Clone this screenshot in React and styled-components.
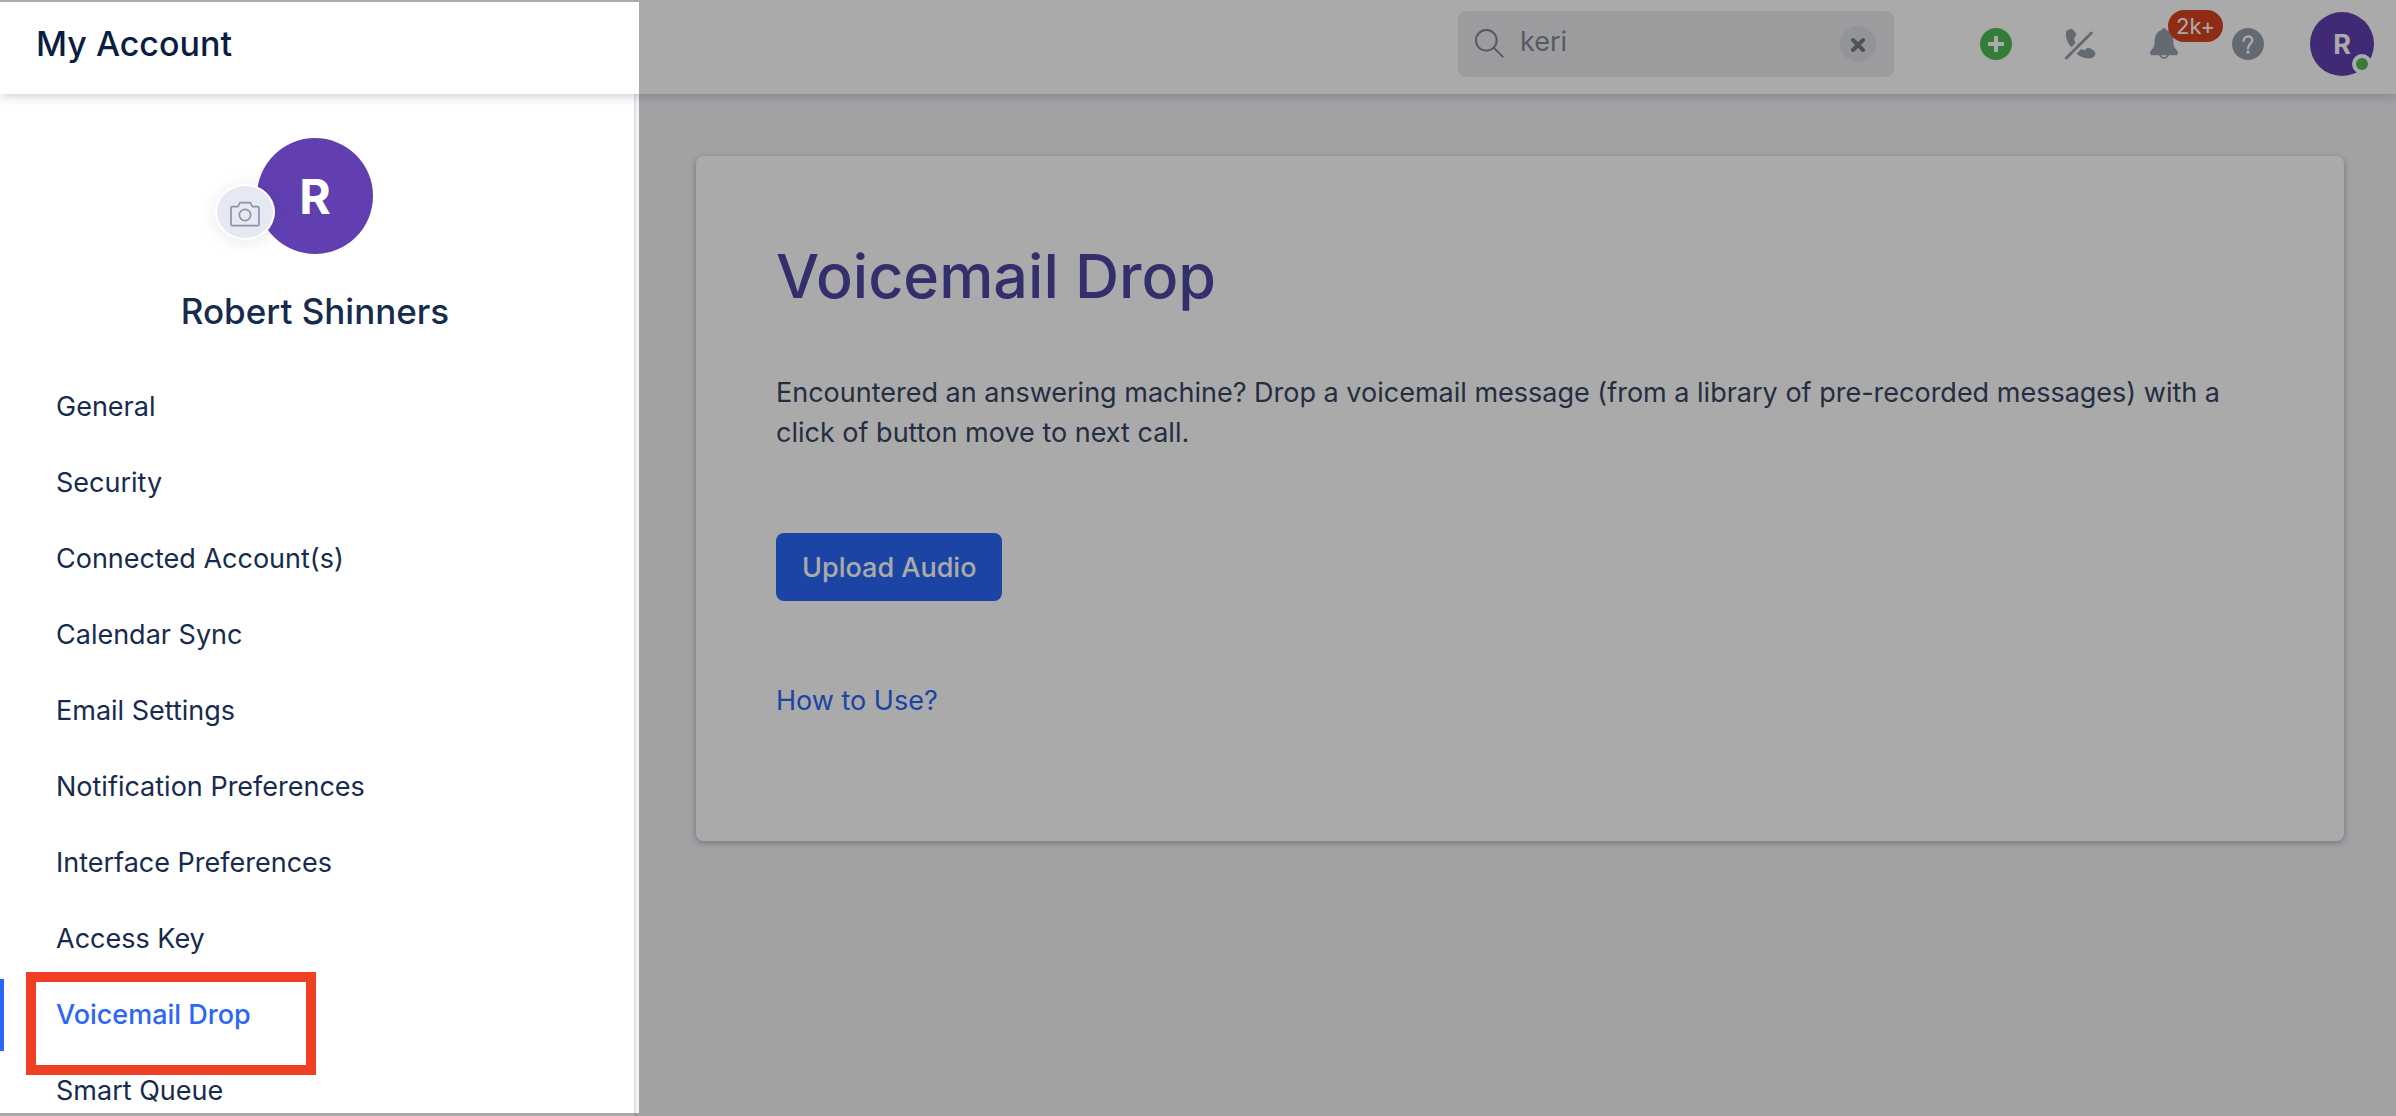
import React, { useState } from "react";
import styled, { createGlobalStyle } from "styled-components";

const GlobalStyle = createGlobalStyle`
  * {
    box-sizing: border-box;
  }

  body {
    margin: 0;
    font-family: Inter, "Liberation Sans", sans-serif;
    color: #172b4d;
  }

  button,
  input {
    font-family: inherit;
  }
`;

// Page frame
const Page = styled.div`
  position: relative;
  display: flex;
  flex-direction: column;
  height: 100vh;
  overflow: hidden;
  background-color: #f1f3f6;
`;

const Header = styled.header`
  position: relative;
  z-index: 1;
  display: flex;
  flex-shrink: 0;
  align-items: center;
  height: 94px;
  padding: 0 22px 6px 36px;
  background-color: #fff;
  box-shadow: 0 2px 10px rgba(30, 35, 70, 0.22);
`;

const PageTitle = styled.h1`
  flex: 1;
  margin: 0;
  font-size: 34px;
  font-weight: 500;
  line-height: 44px;
  color: #091e42;
`;

// Search
const SearchBox = styled.form`
  display: flex;
  align-items: center;
  width: 436px;
  height: 66px;
  margin-right: 86px;
  padding: 0 18px 0 16px;
  border-radius: 8px;
  background-color: #eaebed;

  svg {
    flex-shrink: 0;
  }
`;

const SearchInput = styled.input`
  flex: 1;
  min-width: 0;
  padding: 0 0 4px 14px;
  border: 0;
  outline: 0;
  background: transparent;
  font-size: 27px;
  line-height: 40px;
  color: #7f889a;
`;

const ClearButton = styled.button`
  display: flex;
  align-items: center;
  justify-content: center;
  width: 36px;
  height: 36px;
  padding: 0;
  border: 0;
  border-radius: 50%;
  background-color: #dddee3;
`;

// Header actions
const Actions = styled.div`
  display: flex;
  gap: 52px;
  margin-right: 46px;
`;

const IconButton = styled.button`
  position: relative;
  display: flex;
  width: 32px;
  height: 32px;
  padding: 0;
  border: 0;
  background: transparent;
  cursor: pointer;
`;

const Badge = styled.span`
  position: absolute;
  top: -18px;
  left: 20px;
  padding: 0 8px;
  border-radius: 16px;
  background-color: #d64322;
  color: #fff;
  font-size: 22px;
  line-height: 32px;
`;

const Avatar = styled.div`
  position: relative;
  display: flex;
  align-items: center;
  justify-content: center;
  width: ${({ $size }) => $size}px;
  height: ${({ $size }) => $size}px;
  border-radius: 50%;
  background-color: #613fb0;
  color: #fff;
  font-size: ${({ $fontSize }) => $fontSize}px;
  font-weight: 700;
`;

const StatusDot = styled.span`
  position: absolute;
  right: 2px;
  bottom: 2px;
  width: 20px;
  height: 20px;
  border: 4px solid #fff;
  border-radius: 50%;
  background-color: #4ebb54;
`;

// Sidebar
const Body = styled.div`
  display: flex;
  flex: 1;
  min-height: 0;
`;

const Sidebar = styled.aside`
  flex-shrink: 0;
  width: 636px;
  padding-top: 44px;
  border-right: 2px solid #dfe1e6;
  background-color: #fff;
`;

const Profile = styled.div`
  display: flex;
  flex-direction: column;
  align-items: center;
  margin-bottom: 38px;
  padding-right: 4px;
`;

const CameraButton = styled.button`
  position: absolute;
  left: -42px;
  bottom: 14px;
  display: flex;
  align-items: center;
  justify-content: center;
  width: 60px;
  height: 56px;
  padding: 4px 0 0;
  border: 2px solid #fff;
  border-radius: 50%;
  background-color: #e6e9f1;
  box-shadow: 0 2px 16px rgba(9, 30, 66, 0.1);
`;

const ProfileName = styled.h2`
  margin: 35px 0 0;
  font-size: 35px;
  font-weight: 500;
  line-height: 44px;
`;

const NavList = styled.ul`
  display: flex;
  flex-direction: column;
  gap: 4px;
  margin: 0;
  padding: 0;
  list-style: none;
`;

const NavItem = styled.li`
  position: relative;
`;

const NavLink = styled.a`
  display: block;
  padding-left: 52px;
  border-left: 4px solid ${({ $active }) => ($active ? "#2b66f6" : "transparent")};
  color: ${({ $active }) => ($active ? "#2b66f6" : "#172b4d")};
  font-size: 27px;
  font-weight: ${({ $active }) => ($active ? 500 : 400)};
  line-height: 72px;
  text-decoration: none;
`;

const Highlight = styled.span`
  position: absolute;
  top: -7px;
  left: 26px;
  width: 290px;
  height: 103px;
  border: 10px solid #f04024;
  pointer-events: none;
`;

// Content
const Main = styled.main`
  flex: 1;
  min-width: 0;
  padding: 62px 52px 0 60px;
`;

const Card = styled.section`
  padding: 80px 80px 120px;
  border-radius: 8px;
  background-color: #fff;
  box-shadow: 0 2px 6px rgba(9, 30, 50, 0.3);
`;

const CardTitle = styled.h2`
  margin: 0 0 57px;
  font-size: 61px;
  font-weight: 500;
  line-height: 80px;
  color: #4c47a3;
`;

const Description = styled.p`
  margin: 0 0 80px;
  font-size: 27px;
  line-height: 40px;
  color: #364563;
`;

const UploadButton = styled.button`
  display: block;
  height: 68px;
  margin-bottom: 80px;
  padding: 0 26px;
  border: 0;
  border-radius: 8px;
  background-color: #2b66f6;
  color: #fff;
  font-size: 27px;
  font-weight: 500;
`;

const HelpLink = styled.a`
  display: block;
  color: #2b66f6;
  font-size: 27px;
  line-height: 40px;
  text-decoration: none;
`;

// Dims everything outside of the sidebar
const Spotlight = styled.div`
  position: absolute;
  z-index: 2;
  top: 2px;
  bottom: 3px;
  left: 0;
  width: 639px;
  box-shadow: 0 0 0 9999px rgba(0, 0, 0, 0.333);
  pointer-events: none;
`;

const SearchIcon = () => (
  <svg width="32" height="32" viewBox="0 0 96 96" fill="none" stroke="#7f859b" strokeWidth="6" strokeLinecap="round">
    <circle cx="37" cy="37" r="31" />
    <path d="M59 59 L86 86" />
  </svg>
);

const CloseIcon = () => (
  <svg width="16" height="16" viewBox="0 0 16 16" fill="none" stroke="#747d8e" strokeWidth="4" strokeLinecap="round">
    <path d="M3 4 L13 14 M13 4 L3 14" />
  </svg>
);

const PlusIcon = () => (
  <svg width="32" height="32" viewBox="0 0 32 32">
    <circle cx="16" cy="16" r="16" fill="#4ebb54" />
    <path d="M16 8 V24 M8 16 H24" stroke="#fff" strokeWidth="4" />
  </svg>
);

const PhoneOffIcon = () => (
  <svg width="32" height="32" viewBox="0 0 96 96" fill="#979fac">
    <path d="M9 8 Q18 1 25 3 L36 16 Q39 21 33 27 Q27 32 35 44 L23 58 Q3 40 6 12 Z" />
    <path d="M38 77 L51 63 Q61 69 67 62 Q71 57 77 60 L90 68 Q97 75 92 83 Q86 91 72 91 Q53 90 38 77 Z" />
    <path d="M7 90 L82 15" stroke="#979fac" strokeWidth="9" strokeLinecap="round" />
  </svg>
);

const BellIcon = () => (
  <svg width="32" height="32" viewBox="0 0 96 96" fill="#979fac">
    <path d="M48 0 C43 0 42 4 42 6 C26 10 21 22 20 38 C20 56 14 62 8 68 Q4 74 8 80 Q9 82 13 82 H83 Q87 82 88 80 Q92 74 88 68 C82 62 76 56 76 38 C75 22 70 10 54 6 C54 4 53 0 48 0 Z" />
    <path d="M35 82 Q48 99 61 82" fill="none" stroke="#979fac" strokeWidth="5" />
  </svg>
);

const HelpIcon = () => (
  <svg width="32" height="32" viewBox="0 0 96 96">
    <circle cx="48" cy="48" r="48" fill="#979fac" />
    <path
      d="M35 38 C35 22 61 21 61 37 C61 47 48 47 48 61"
      fill="none"
      stroke="#fff"
      strokeWidth="7"
      strokeLinecap="round"
    />
    <circle cx="48" cy="72" r="5" fill="#fff" />
  </svg>
);

const CameraIcon = () => (
  <svg width="30" height="26" viewBox="0 0 90 78" fill="none" stroke="#8993a9" strokeWidth="5" strokeLinejoin="round">
    <path d="M7 17 H24 L30 5 H61 L67 17 H83 Q87 17 87 21 V70 Q87 74 83 74 H7 Q3 74 3 70 V21 Q3 17 7 17 Z" />
    <circle cx="45" cy="42" r="17" />
  </svg>
);

const navItems = [
  "General",
  "Security",
  "Connected Account(s)",
  "Calendar Sync",
  "Email Settings",
  "Notification Preferences",
  "Interface Preferences",
  "Access Key",
  "Voicemail Drop",
  "Smart Queue",
];

const App = () => {
  const [query, setQuery] = useState("keri");
  const active = "Voicemail Drop";

  return (
    <>
      <GlobalStyle />
      <Page>
        <Header>
          <PageTitle>My Account</PageTitle>
          <SearchBox role="search" onSubmit={(e) => e.preventDefault()}>
            <SearchIcon />
            <SearchInput aria-label="Search" value={query} onChange={(e) => setQuery(e.target.value)} />
            <ClearButton type="button" aria-label="Clear search" onClick={() => setQuery("")}>
              <CloseIcon />
            </ClearButton>
          </SearchBox>
          <Actions>
            <IconButton aria-label="Add">
              <PlusIcon />
            </IconButton>
            <IconButton aria-label="Phone">
              <PhoneOffIcon />
            </IconButton>
            <IconButton aria-label="Notifications">
              <BellIcon />
              <Badge>2k+</Badge>
            </IconButton>
            <IconButton aria-label="Help">
              <HelpIcon />
            </IconButton>
          </Actions>
          <Avatar $size={64} $fontSize={27}>
            R
            <StatusDot />
          </Avatar>
        </Header>

        <Body>
          {/* Account navigation */}
          <Sidebar>
            <Profile>
              <Avatar $size={116} $fontSize={48}>
                R
                <CameraButton aria-label="Change photo">
                  <CameraIcon />
                </CameraButton>
              </Avatar>
              <ProfileName>Robert Shinners</ProfileName>
            </Profile>
            <nav>
              <NavList>
                {navItems.map((item) => (
                  <NavItem key={item}>
                    <NavLink href="#" $active={item === active}>
                      {item}
                    </NavLink>
                    {item === active && <Highlight />}
                  </NavItem>
                ))}
              </NavList>
            </nav>
          </Sidebar>

          {/* Voicemail drop settings */}
          <Main>
            <Card>
              <CardTitle>Voicemail Drop</CardTitle>
              <Description>
                Encountered an answering machine? Drop a voicemail message (from a library of pre-recorded
                messages) with a click of button move to next call.
              </Description>
              <UploadButton type="button">Upload Audio</UploadButton>
              <HelpLink href="#">How to Use?</HelpLink>
            </Card>
          </Main>
        </Body>
        <Spotlight />
      </Page>
    </>
  );
};

export default App;
